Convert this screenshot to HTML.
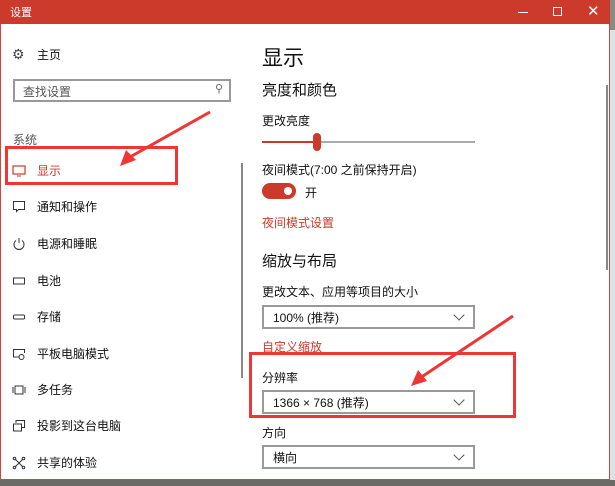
<!DOCTYPE html>
<html><head><meta charset="utf-8"><style>
*{margin:0;padding:0;box-sizing:border-box}
body{width:615px;height:486px;overflow:hidden;position:relative;background:#8a8a84;font-family:"Liberation Sans","Noto Sans CJK SC",sans-serif;color:#111}
.abs{position:absolute;white-space:nowrap}
#win{position:absolute;left:0;top:0;width:610px;height:480px;background:#fff;border:1px solid #d0483a}
#title{position:absolute;left:0;top:0;width:610px;height:24px;background:#cc3a2b;color:#fff}
.t12{font-size:12px}
.dd{position:absolute;left:262px;width:213px;height:24px;border:2px solid #999;font-size:12px;padding:2px 0 0 9px}
.dd:after{content:"";position:absolute;right:10px;top:4px;width:7px;height:7px;border-right:1px solid #555;border-bottom:1px solid #555;transform:rotate(45deg)}
.ico{position:absolute;left:12px;width:14px;height:14px}
</style></head><body>
<div style="position:absolute;left:610px;top:30px;width:5px;height:456px;background:#d8e4e6"></div>
<div style="position:absolute;left:0;top:480px;width:615px;height:6px;background:#6c6a66"></div>
<div id="win"></div>
<div id="title"><span class="abs t12" style="left:10px;top:4px;font-size:11px">设置</span>
<div class="abs" style="left:518px;top:12px;width:10px;height:1px;background:#fff"></div>
<div class="abs" style="left:553px;top:7px;width:9px;height:9px;border:1px solid #fff"></div>
<span class="abs" style="left:587px;top:2px;font-size:15px;color:#fff">✕</span></div>
<span class="abs" style="left:12px;top:46px;font-size:14px;color:#444">⚙</span>
<span class="abs t12" style="left:37px;top:46px">主页</span>
<div class="abs" style="left:13px;top:79px;width:218px;height:23px;border:2px solid #999"></div>
<span class="abs t12" style="left:23px;top:83px;color:#555">查找设置</span>
<span class="abs" style="left:215px;top:82px;font-size:11px;color:#666">⚲</span>
<span class="abs t12" style="left:13px;top:131px;color:#555">系统</span>
<div class="abs" style="left:5px;top:146px;width:173px;height:39px;border:3px solid #f03535"></div>
<svg class="ico" style="top:164px" viewBox="0 0 14 14"><rect x="1" y="2" width="12" height="8" fill="none" stroke="#cc3a2b" stroke-width="1.2"/><path d="M5 12h4" stroke="#cc3a2b"/></svg>
<span class="abs t12" style="left:37px;top:162px;color:#cc3a2b">显示</span>
<svg class="ico" style="top:200px" viewBox="0 0 14 14"><path d="M1.5 1.5h11v8h-6l-2 2v-2h-3z" fill="none" stroke="#333"/></svg>
<span class="abs t12" style="left:37px;top:198px">通知和操作</span>
<svg class="ico" style="top:237px" viewBox="0 0 14 14"><path d="M4 3.5a5 5 0 1 0 6 0M7 1v5" fill="none" stroke="#333"/></svg>
<span class="abs t12" style="left:37px;top:235px">电源和睡眠</span>
<svg class="ico" style="top:274px" viewBox="0 0 14 14"><rect x="1.5" y="4" width="11" height="6" fill="none" stroke="#333"/></svg>
<span class="abs t12" style="left:37px;top:272px">电池</span>
<svg class="ico" style="top:310px" viewBox="0 0 14 14"><rect x="1.5" y="5" width="11" height="4" rx="1" fill="none" stroke="#333"/></svg>
<span class="abs t12" style="left:37px;top:308px">存储</span>
<svg class="ico" style="top:347px" viewBox="0 0 14 14"><path d="M7 10H1.5V2.5h11V6" fill="none" stroke="#333"/><circle cx="9.5" cy="10" r="2.5" fill="none" stroke="#333"/></svg>
<span class="abs t12" style="left:37px;top:345px">平板电脑模式</span>
<svg class="ico" style="top:383px" viewBox="0 0 14 14"><rect x="3" y="3" width="8" height="8" fill="none" stroke="#333"/><path d="M1 4v6M13 4v6" stroke="#333"/></svg>
<span class="abs t12" style="left:37px;top:381px">多任务</span>
<svg class="ico" style="top:419px" viewBox="0 0 14 14"><path d="M4 4V1.5h8.5v7H10M1.5 5h8v7h-8z" fill="none" stroke="#333"/></svg>
<span class="abs t12" style="left:37px;top:417px">投影到这台电脑</span>
<svg class="ico" style="top:456px" viewBox="0 0 14 14"><path d="M3 3l8 8M11 3l-8 8" stroke="#333"/><circle cx="2.5" cy="2.5" r="1.3" fill="#fff" stroke="#333"/><circle cx="11.5" cy="2.5" r="1.3" fill="#fff" stroke="#333"/><circle cx="2.5" cy="11.5" r="1.3" fill="#fff" stroke="#333"/><circle cx="11.5" cy="11.5" r="1.3" fill="#fff" stroke="#333"/></svg>
<span class="abs t12" style="left:37px;top:454px">共享的体验</span>
<div class="abs" style="left:241px;top:163px;width:2px;height:215px;background:#888"></div>
<div class="abs" style="left:606px;top:85px;width:2px;height:185px;background:#888"></div>
<span class="abs" style="left:262px;top:42px;font-size:21px">显示</span>
<span class="abs" style="left:262px;top:79px;font-size:15px">亮度和颜色</span>
<span class="abs t12" style="left:262px;top:112px">更改亮度</span>
<div class="abs" style="left:262px;top:141px;width:213px;height:2px;background:#aaa"></div>
<div class="abs" style="left:262px;top:141px;width:55px;height:2px;background:#cc3a2b"></div>
<div class="abs" style="left:313px;top:133px;width:8px;height:18px;border-radius:4px;background:#cc3a2b"></div>
<span class="abs t12" style="left:262px;top:161px">夜间模式(7:00 之前保持开启)</span>
<div class="abs" style="left:262px;top:183px;width:34px;height:16px;border-radius:8px;background:#cc3a2b"></div>
<div class="abs" style="left:284px;top:187px;width:8px;height:8px;border-radius:4px;background:#fff"></div>
<span class="abs t12" style="left:305px;top:184px">开</span>
<span class="abs t12" style="left:262px;top:214px;color:#cc3a2b">夜间模式设置</span>
<span class="abs" style="left:262px;top:250px;font-size:15px">缩放与布局</span>
<span class="abs t12" style="left:262px;top:283px">更改文本、应用等项目的大小</span>
<div class="dd" style="top:305px">100% (推荐)</div>
<span class="abs t12" style="left:262px;top:338px;color:#cc3a2b">自定义缩放</span>
<div class="abs" style="left:249px;top:352px;width:267px;height:66px;border:3px solid #f03535"></div>
<span class="abs t12" style="left:262px;top:369px">分辨率</span>
<div class="dd" style="top:390px">1366 × 768 (推荐)</div>
<span class="abs t12" style="left:262px;top:424px">方向</span>
<div class="dd" style="top:445px">横向</div>
<svg class="abs" style="left:0;top:0" width="615" height="486">
<path d="M210 112L130 157" stroke="#f03535" stroke-width="3"/><path d="M120 166l6-16 10 10z" fill="#f03535"/>
<path d="M513 316L420 378" stroke="#f03535" stroke-width="3"/><path d="M411 386l7-16 9 11z" fill="#f03535"/>
</svg>
</body></html>
